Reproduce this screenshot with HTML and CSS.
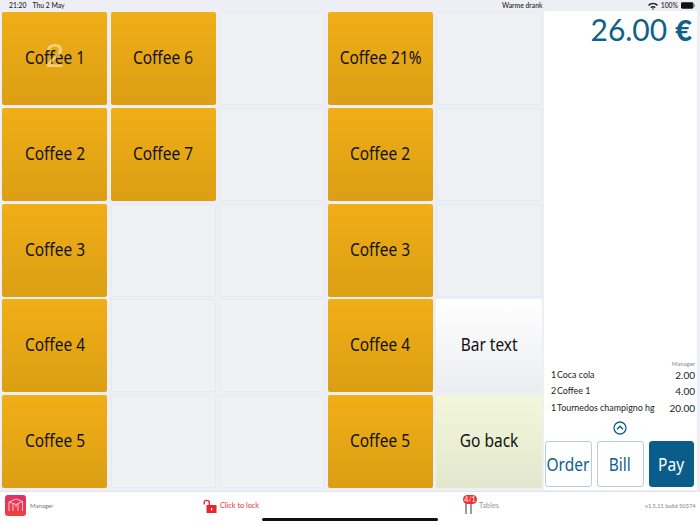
FILE: index.html
```html
<!DOCTYPE html>
<html lang="en">
<head>
<meta charset="utf-8">
<title>POS</title>
<link rel="stylesheet" href="styles.css">
</head>
<body>
<div class="app">
  <header class="status">
    <span class="clock">21:20</span><span class="date">Thu 2 May</span>
    <span class="title">Warme drank</span>
    <span class="sys">
      <svg class="wifi" width="10" height="8" viewBox="0 0 10 8"><path d="M0 2.8C2.8 0 7.2 0 10 2.8L8.9 3.9C6.7 1.8 3.3 1.8 1.1 3.9Z" fill="#222"/><path d="M2.2 5C3.8 3.5 6.2 3.5 7.8 5L6.7 6.1C5.7 5.2 4.3 5.2 3.3 6.1Z" fill="#222"/><path d="M5 8L3.9 6.8C4.5 6.3 5.5 6.3 6.1 6.8Z" fill="#222"/></svg>
      <span>100%</span>
      <svg width="14" height="7" viewBox="0 0 14 7"><rect width="12.4" height="6.4" y=".3" rx="1.4" fill="#111"/><rect x="12.8" y="2.2" width="1" height="2.6" fill="#777"/></svg>
    </span>
  </header>
  <main class="main">
    <section class="grid">
      <button class="tile gold"><span class="lbl">Coffee 1</span><span class="qty">2</span></button>
      <button class="tile gold"><span class="lbl">Coffee 6</span></button>
      <div class="tile empty"></div>
      <button class="tile gold"><span class="lbl">Coffee 21%</span></button>
      <div class="tile empty"></div>
      <button class="tile gold"><span class="lbl">Coffee 2</span></button>
      <button class="tile gold"><span class="lbl">Coffee 7</span></button>
      <div class="tile empty"></div>
      <button class="tile gold"><span class="lbl">Coffee 2</span></button>
      <div class="tile empty"></div>
      <button class="tile gold"><span class="lbl">Coffee 3</span></button>
      <div class="tile empty"></div>
      <div class="tile empty"></div>
      <button class="tile gold"><span class="lbl">Coffee 3</span></button>
      <div class="tile empty"></div>
      <button class="tile gold"><span class="lbl">Coffee 4</span></button>
      <div class="tile empty"></div>
      <div class="tile empty"></div>
      <button class="tile gold"><span class="lbl">Coffee 4</span></button>
      <button class="tile white"><span class="lbl">Bar text</span></button>
      <button class="tile gold"><span class="lbl">Coffee 5</span></button>
      <div class="tile empty"></div>
      <div class="tile empty"></div>
      <button class="tile gold"><span class="lbl">Coffee 5</span></button>
      <button class="tile green"><span class="lbl">Go back</span></button>
    </section>
    <aside class="panel">
      <div class="total"><span>26.00</span><b>€</b></div>
      <div class="order">
        <div class="waiter">Manager</div>
        <div class="line"><span class="q">1</span><span class="name">Coca cola</span><span class="price">2.00</span></div>
        <div class="line"><span class="q">2</span><span class="name">Coffee 1</span><span class="price">4.00</span></div>
        <div class="line"><span class="q">1</span><span class="name">Tournedos champigno hg</span><span class="price">20.00</span></div>
      </div>
      <div class="chev">
        <svg width="14" height="14" viewBox="0 0 14 14" fill="none" stroke="#10608c" stroke-width="1.3"><circle cx="7" cy="7" r="6"/><path d="M4 8.3L7 5.3L10 8.3" stroke-width="1.5"/></svg>
      </div>
      <div class="actions">
        <button class="act"><span class="lbl">Order</span></button>
        <button class="act"><span class="lbl">Bill</span></button>
        <button class="act pay"><span class="lbl">Pay</span></button>
      </div>
    </aside>
  </main>
  <footer class="foot">
    <div class="cell user">
      <svg width="21" height="21" viewBox="0 0 21 21"><defs><linearGradient id="lg" x1="0" y1="0" x2="0" y2="1"><stop offset="0" stop-color="#e0306a"/><stop offset="1" stop-color="#f0403a"/></linearGradient></defs><rect width="21" height="21" rx="3" fill="url(#lg)"/><path d="M4 7L11 4L17.500 6.500V16M4 7V16M4 7L11 9.500L17.500 6.500M8 8.500V16M13 8.500V16M11 9.500V12" fill="none" stroke="#f6c6cf" stroke-width="1"/></svg>
      <span>Manager</span>
    </div>
    <div class="cell lock">
      <svg width="14" height="14" viewBox="0 0 14 14"><path d="M1.200 5.500V3.500C1.200 .6 6.300 .6 6.300 3.500V6" fill="none" stroke="#e8262c" stroke-width="1.400"/><rect x="3.500" y="6" width="10" height="8" fill="#e8262c"/><rect x="8" y="9" width="1.200" height="2.500" fill="#fff"/></svg>
      <span>Click to lock</span>
    </div>
    <div class="cell tables">
      <span class="tblicon"><i></i><i></i><em class="badge">4/1</em></span>
      <span>Tables</span>
    </div>
    <div class="cell version">v1.5.11 build 50374</div>
  </footer>
  <div class="home"></div>
</div>
</body>
</html>
```
FILE: styles.css
```css
* { box-sizing: border-box; }
html, body { margin: 0; padding: 0; }
body { width: 700px; height: 525px; overflow: hidden; background: #eeeff4; font-family: Lato, "Noto Sans", sans-serif; color: #111; }
.app { position: relative; width: 700px; height: 525px; display: flex; flex-direction: column; }
.status { height: 11px; flex: none; display: flex; align-items: center; padding: 0 3px 0 9px; font-size: 6.800px; line-height: 11px; color: #222; position: relative; font-weight: 500; }
.date { margin-left: 6px; }
.title { position: absolute; left: 502px; top: 0; }
.sys { margin-left: auto; display: flex; align-items: center; gap: 3px; margin-right: 2px; }
.main { flex: none; height: 480px; display: flex; padding-left: 2px; }
.grid { width: 539px; flex: none; display: grid; grid-template-columns: repeat(5, 105.400px); grid-auto-rows: 93px; column-gap: 3.200px; row-gap: 2.800px; padding-top: 1px; }
.tile { border: 0; margin: 0; padding: 0 0 3px; border-radius: 2px; color: #111; position: relative; display: flex; align-items: center; justify-content: center; }
.lbl { font-family: "Noto Sans", sans-serif; font-size: 18px; display: block; white-space: nowrap; transform: scaleX(.86); }
.gold { background: linear-gradient(#f0ae17, #dc9f14); }
.empty { background: #f0f1f5; box-shadow: inset 0 0 0 1px #e8e9ee; }
.white { background: linear-gradient(#ffffff, #ecedf0); }
.green { background: linear-gradient(#f3f8dc, #e2e7cd); }
.qty { position: absolute; left: 0; right: 0; top: 46%; transform: translateY(-50%); text-align: center; font-family: inherit; font-size: 34px; line-height: 34px; color: rgba(255, 238, 190, .62); }
.panel { width: 153px; margin-left: 3px; flex: none; background: #fff; border-radius: 2px; display: flex; flex-direction: column; padding: 0 2px 3px 1px; height: 479px; }
.total { height: 37px; display: flex; justify-content: flex-end; gap: 8px; color: #10608c; font-size: 30px; line-height: 37px; padding-right: 3px; white-space: nowrap; }
.total b { font-weight: 900; font-size: 29px; }
.order { margin-top: auto; padding: 0 0 0 6px; transform: translateY(2px); }
.waiter { text-align: right; font-size: 6px; line-height: 7px; color: #888; }
.line { display: flex; font-size: 8.900px; line-height: 16.800px; color: #222; }
.q { width: 5px; text-align: right; margin-right: 1px; }
.name { flex: 1; }
.price { text-align: right; font-size: 10px; }
.chev { height: 14px; display: flex; justify-content: center; margin-top: 6px; }
.actions { display: flex; gap: 5.500px; margin-top: 6px; }
.act { width: 46.500px; height: 46px; border: 1px solid #b5cfdc; border-radius: 3px; background: #fff; color: #10608c; padding: 0; display: flex; align-items: center; justify-content: center; }
.pay { width: 45px; background: #0a5d8a; border-color: #0a5d8a; color: #fff; }
.foot { flex: 1; background: #fff; position: relative; display: flex; align-items: flex-start; border-top: 1px solid #e4e5ea; padding-top: 3px; font-size: 6.500px; }
.cell { display: flex; align-items: center; height: 21px; }
.user { width: 203px; padding-left: 5px; gap: 4px; color: #777; font-size: 6px; }
.lock { width: 258px; gap: 3px; color: #e8363c; font-size: 7.300px; }
.tables { width: 184px; gap: 6px; color: #999; font-size: 7.300px; }
.version { color: #888; font-size: 5.700px; white-space: nowrap; font-weight: 500; }
.tblicon { position: relative; display: flex; gap: 3px; width: 8px; height: 17px; margin-left: 4px; margin-top: -2px; }
.tblicon i { width: 2px; height: 11px; background: #999; margin-top: 7px; border-radius: 1px 1px 0 0; }
.badge { position: absolute; left: -2px; top: -1px; width: 14px; height: 9px; border-radius: 4.500px; background: #f03030; color: #fff; font-style: normal; font-size: 7px; line-height: 9px; text-align: center; }
.home { position: absolute; left: 262px; top: 518px; width: 176px; height: 3px; border-radius: 2px; background: #111; }
```
